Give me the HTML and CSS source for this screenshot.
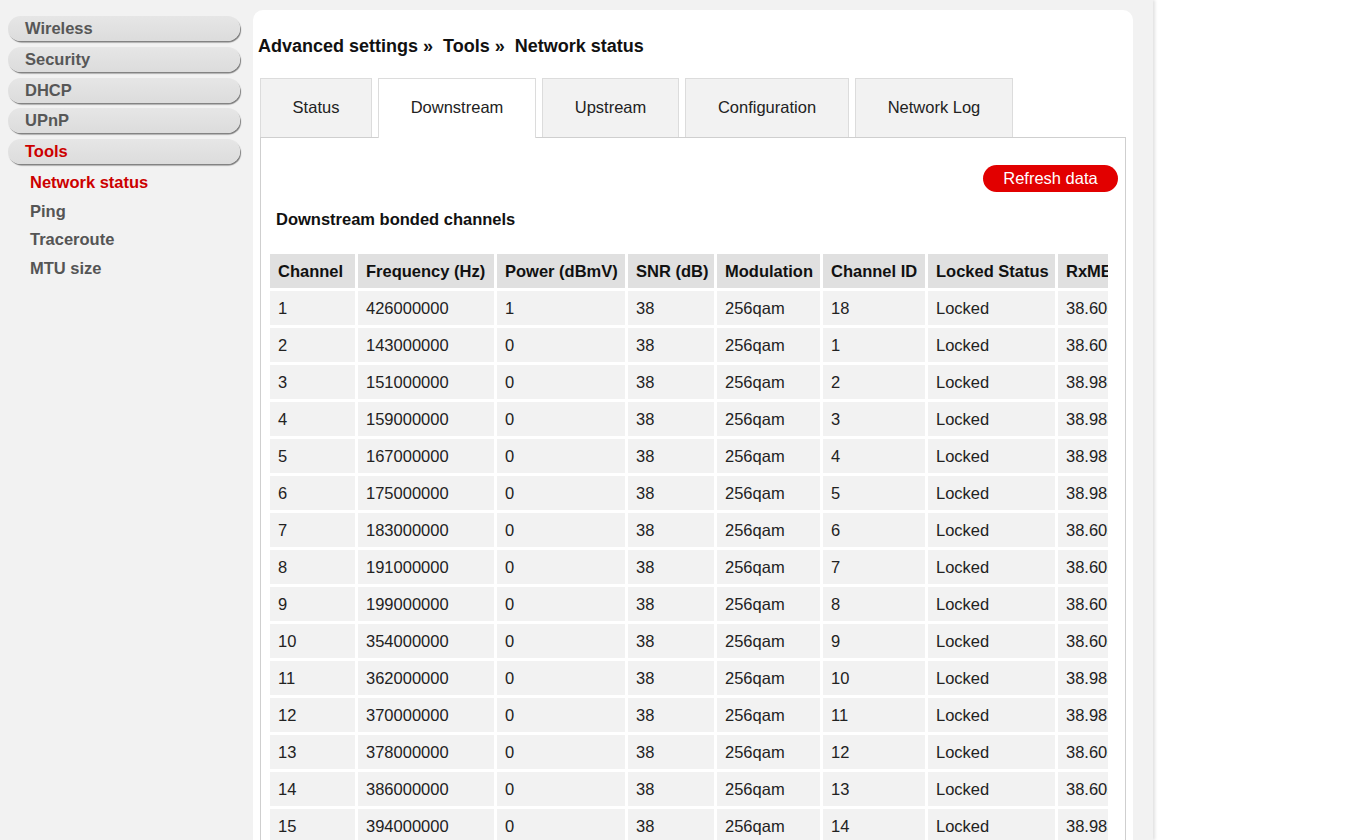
FILE: index.html
```html
<!DOCTYPE html>
<html>
<head>
<meta charset="utf-8">
<link rel="stylesheet" href="styles.css">
</head>
<body>
<div class="page">
  <nav class="sidebar">
    <div class="pill">Wireless</div>
    <div class="pill">Security</div>
    <div class="pill">DHCP</div>
    <div class="pill">UPnP</div>
    <div class="pill active">Tools</div>
    <ul class="sub">
      <li class="active">Network status</li>
      <li>Ping</li>
      <li>Traceroute</li>
      <li>MTU size</li>
    </ul>
  </nav>
  <main class="card">
    <h1 class="crumbs">Advanced settings »&nbsp; Tools »&nbsp; Network status</h1>
    <div class="tabs">
      <div class="tab t1">Status</div>
      <div class="tab t2 active">Downstream</div>
      <div class="tab t3">Upstream</div>
      <div class="tab t4">Configuration</div>
      <div class="tab t5">Network Log</div>
    </div>
    <section class="panel">
      <div class="btnrow"><button class="refresh">Refresh data</button></div>
      <h2 class="sectitle">Downstream bonded channels</h2>
      <div class="tablewrap">
        <table class="data">
          <thead>
            <tr><th class="c1">Channel</th><th class="c2">Frequency (Hz)</th><th class="c3">Power (dBmV)</th><th class="c4">SNR (dB)</th><th class="c5">Modulation</th><th class="c6">Channel ID</th><th class="c7">Locked Status</th><th class="c8">RxMER (dB)</th></tr>
          </thead>
          <tbody>
            <tr><td>1</td><td>426000000</td><td>1</td><td>38</td><td>256qam</td><td>18</td><td>Locked</td><td>38.605</td></tr>
            <tr><td>2</td><td>143000000</td><td>0</td><td>38</td><td>256qam</td><td>1</td><td>Locked</td><td>38.605</td></tr>
            <tr><td>3</td><td>151000000</td><td>0</td><td>38</td><td>256qam</td><td>2</td><td>Locked</td><td>38.983</td></tr>
            <tr><td>4</td><td>159000000</td><td>0</td><td>38</td><td>256qam</td><td>3</td><td>Locked</td><td>38.983</td></tr>
            <tr><td>5</td><td>167000000</td><td>0</td><td>38</td><td>256qam</td><td>4</td><td>Locked</td><td>38.983</td></tr>
            <tr><td>6</td><td>175000000</td><td>0</td><td>38</td><td>256qam</td><td>5</td><td>Locked</td><td>38.983</td></tr>
            <tr><td>7</td><td>183000000</td><td>0</td><td>38</td><td>256qam</td><td>6</td><td>Locked</td><td>38.605</td></tr>
            <tr><td>8</td><td>191000000</td><td>0</td><td>38</td><td>256qam</td><td>7</td><td>Locked</td><td>38.605</td></tr>
            <tr><td>9</td><td>199000000</td><td>0</td><td>38</td><td>256qam</td><td>8</td><td>Locked</td><td>38.605</td></tr>
            <tr><td>10</td><td>354000000</td><td>0</td><td>38</td><td>256qam</td><td>9</td><td>Locked</td><td>38.605</td></tr>
            <tr><td>11</td><td>362000000</td><td>0</td><td>38</td><td>256qam</td><td>10</td><td>Locked</td><td>38.983</td></tr>
            <tr><td>12</td><td>370000000</td><td>0</td><td>38</td><td>256qam</td><td>11</td><td>Locked</td><td>38.983</td></tr>
            <tr><td>13</td><td>378000000</td><td>0</td><td>38</td><td>256qam</td><td>12</td><td>Locked</td><td>38.605</td></tr>
            <tr><td>14</td><td>386000000</td><td>0</td><td>38</td><td>256qam</td><td>13</td><td>Locked</td><td>38.605</td></tr>
            <tr><td>15</td><td>394000000</td><td>0</td><td>38</td><td>256qam</td><td>14</td><td>Locked</td><td>38.983</td></tr>
            <tr><td>16</td><td>402000000</td><td>0</td><td>38</td><td>256qam</td><td>15</td><td>Locked</td><td>38.983</td></tr>
          </tbody>
        </table>
      </div>
    </section>
  </main>
</div>
</body>
</html>
```

FILE: styles.css
```css
html, body {
  margin: 0;
  padding: 0;
  background: #ffffff;
  font-family: "Liberation Sans", Arial, sans-serif;
  color: #111;
}
.page {
  width: 1153px;
  height: 840px;
  overflow: hidden;
  background: #f2f2f2;
  box-shadow: 2px 0 3px rgba(0,0,0,0.12);
  display: flex;
  align-items: flex-start;
}
.sidebar {
  width: 245px;
  flex: none;
  padding-top: 16px;
}
.pill {
  margin-left: 8px;
  width: 232px;
  height: 25px;
  box-sizing: border-box;
  padding-left: 17px;
  margin-bottom: 5.75px;
  border-radius: 13px;
  background: linear-gradient(#e6e6e6, #dcdcdc);
  box-shadow: 1px 1.5px 1px #7d7d7d;
  font-weight: bold;
  font-size: 16.5px;
  line-height: 25px;
  color: #575757;
}
.pill.active { color: #cc0000; }
.sub {
  list-style: none;
  margin: 0;
  padding: 1px 0 0 30px;
}
.sub li {
  font-weight: bold;
  font-size: 16.5px;
  color: #555;
  height: 28.8px;
  line-height: 22px;
}
.sub li.active { color: #cc0000; }
.card {
  margin-left: 8px;
  margin-top: 10px;
  width: 880px;
  height: 900px;
  background: #fff;
  border-radius: 10px;
  padding: 0 7px 0 7px;
  box-sizing: border-box;
}
.crumbs {
  margin: 0 0 0 -2px;
  padding: 24px 0 0 0;
  font-size: 18px;
  font-weight: bold;
  line-height: 24px;
  height: 68px;
  box-sizing: border-box;
  color: #111;
}
.tabs {
  display: flex;
  gap: 6px;
  height: 60px;
  position: relative;
  z-index: 1;
}
.tab {
  box-sizing: border-box;
  height: 59px;
  background: #f2f2f2;
  border: 1px solid #dcdcdc;
  border-bottom: none;
  font-size: 16.5px;
  line-height: 57px;
  text-align: center;
  color: #222;
}
.tab.active {
  background: #fff;
  height: 60px;
}
.t1 { width: 112px; }
.t2 { width: 158px; }
.t3 { width: 137px; }
.t4 { width: 164px; }
.t5 { width: 158px; }
.panel {
  margin-top: -1px;
  width: 866px;
  height: 720px;
  box-sizing: border-box;
  border: 1px solid #cfcfcf;
  border-bottom: none;
  padding: 27px 7px 0 6px;
}
.btnrow {
  display: flex;
  justify-content: flex-end;
  padding-right: 0;
}
.refresh {
  width: 135px;
  height: 27px;
  border: none;
  border-radius: 14px;
  background: #e20000;
  color: #fff;
  font-family: "Liberation Sans", Arial, sans-serif;
  font-size: 16.5px;
  padding: 0;
}
.sectitle {
  margin: 17px 0 0 9px;
  font-size: 16.5px;
  font-weight: bold;
  line-height: 20px;
}
.tablewrap {
  margin-top: 22px;
  width: 841px;
  overflow: hidden;
}
.data {
  border-collapse: separate;
  border-spacing: 3px;
  table-layout: fixed;
  width: 912px;
  font-size: 16.5px;
}
.data th, .data td {
  text-align: left;
  padding: 0 0 0 8px;
  white-space: nowrap;
  overflow: hidden;
}
.data th {
  background: #e0e0e0;
  font-weight: bold;
  height: 34px;
  color: #111;
}
.data td {
  background: #f2f2f2;
  height: 34px;
  color: #222;
}
.c1 { width: 77px; }
.c2 { width: 128px; }
.c3 { width: 120px; }
.c4 { width: 78px; }
.c5 { width: 95px; }
.c6 { width: 94px; }
.c7 { width: 119px; }
.c8 { width: 110px; }
```
